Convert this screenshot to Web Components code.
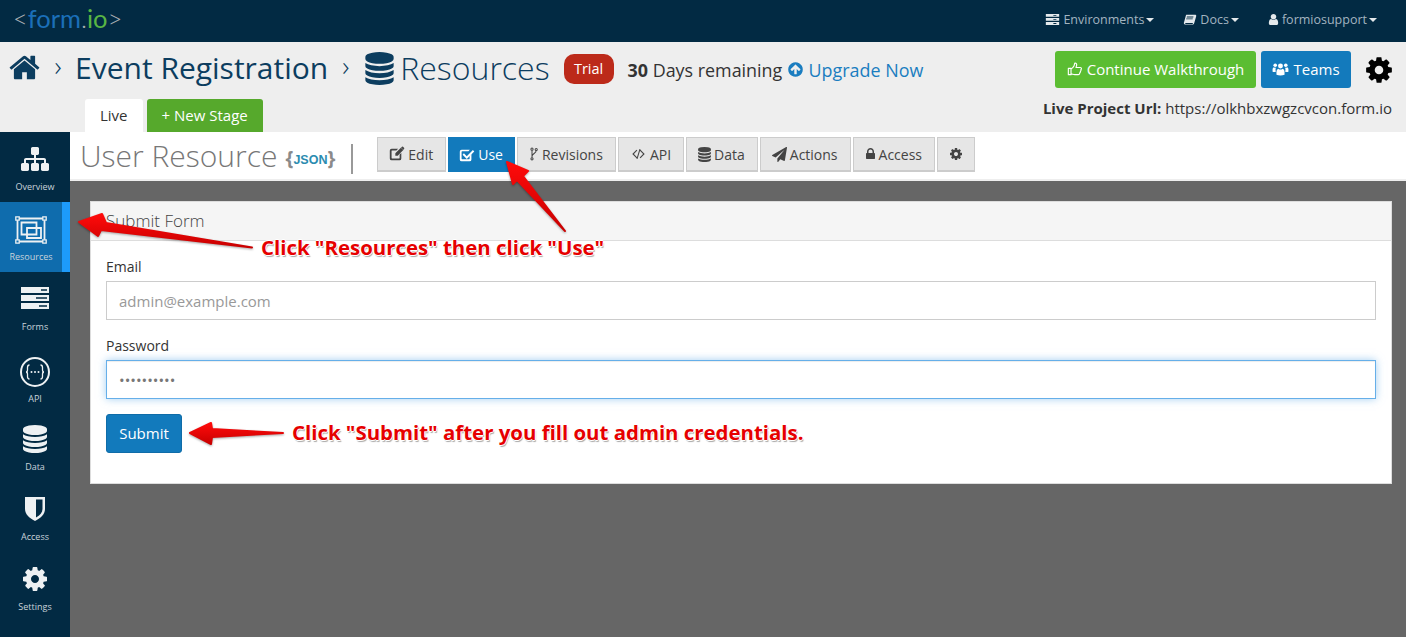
<!DOCTYPE html>
<html lang="en">
<head>
<meta charset="utf-8">
<title>Event Registration - User Resource</title>
<style>
	html, body { margin: 0; height: 100%; overflow: hidden; }
	body { font-family: "Open Sans", "Liberation Sans", sans-serif; color: #333; }
</style>
</head>
<body>
<app-shell>
	<top-bar slot="top"></top-bar>
	<project-header slot="header"></project-header>
	<side-nav slot="side">
		<nav-item icon="sitemap" size="28" label="Overview"></nav-item>
		<nav-item icon="resources" label="Resources" active></nav-item>
		<nav-item icon="forms" label="Forms"></nav-item>
		<nav-item icon="api" label="API"></nav-item>
		<nav-item icon="database" size="28" label="Data"></nav-item>
		<nav-item icon="shield" label="Access"></nav-item>
		<nav-item icon="cog" size="28" label="Settings"></nav-item>
	</side-nav>
	<resource-toolbar slot="toolbar">
		<tool-btn icon="edit" size="16" w="14">Edit</tool-btn>
		<tool-btn icon="check" size="16" w="14" active>Use</tool-btn>
		<tool-btn icon="fork" w="8">Revisions</tool-btn>
		<tool-btn icon="code" w="15">API</tool-btn>
		<tool-btn icon="database" size="15" w="11">Data</tool-btn>
		<tool-btn icon="plane" size="15" w="13">Actions</tool-btn>
		<tool-btn icon="lock" w="9">Access</tool-btn>
		<tool-btn icon="cog" w="12"></tool-btn>
	</resource-toolbar>
	<submit-panel slot="content"></submit-panel>
</app-shell>
<callout-layer></callout-layer>

<script>
const ICONS = {
	home: '<path d="M1472 992v480q0 26-19 45t-45 19h-384v-384h-256v384h-384q-26 0-45-19t-19-45v-480q0-1 .5-3t.5-3l575-474 575 474q1 2 1 6zm223-69l-62 74q-8 9-21 11h-3q-13 0-21-7l-692-577-692 577q-12 8-24 7-13-2-21-11l-62-74q-8-10-7-23.500t11-21.500l719-599q32-26 76-26t76 26l244 204v-195q0-14 9-23t23-9h192q14 0 23 9t9 23v408l219 182q10 8 11 21.500t-7 23.500z"/>',
	database: '<path d="M896 768q237 0 443-43t325-127v170q0 69-103 128t-280 93.500-385 34.500-385-34.500-280-93.500-103-128v-170q119 84 325 127t443 43zm0 768q237 0 443-43t325-127v170q0 69-103 128t-280 93.500-385 34.500-385-34.500-280-93.500-103-128v-170q119 84 325 127t443 43zm0-384q237 0 443-43t325-127v170q0 69-103 128t-280 93.500-385 34.500-385-34.500-280-93.500-103-128v-170q119 84 325 127t443 43zm0-1152q208 0 385 34.500t280 93.500 103 128v128q0 69-103 128t-280 93.500-385 34.500-385-34.500-280-93.500-103-128v-128q0-69 103-128t280-93.500 385-34.500z"/>',
	cog: '<path d="M1152 896q0-106-75-181t-181-75-181 75-75 181 75 181 181 75 181-75 75-181zm512-109v222q0 12-8 23t-20 13l-185 28q-19 54-39 91 35 50 107 138 10 12 10 25t-9 23q-27 37-99 108t-94 71q-12 0-26-9l-138-108q-44 23-91 38-16 136-29 186-7 28-36 28h-222q-14 0-24.500-8.500t-11.500-21.500l-28-184q-49-16-90-37l-141 107q-10 9-25 9-14 0-25-11-126-114-165-168-7-10-7-23 0-12 8-23 15-21 51-66.500t54-70.500q-27-50-41-99l-183-27q-13-2-21-12.500t-8-23.500v-222q0-12 8-23t19-13l186-28q14-46 39-92-40-57-107-138-10-12-10-24 0-10 9-23 26-36 98.500-107.500t94.500-71.500q13 0 26 10l138 107q44-23 91-38 16-136 29-186 7-28 36-28h222q14 0 24.500 8.500t11.500 21.500l28 184q49 16 90 37l142-107q9-9 24-9 13 0 25 10 129 119 165 170 7 8 7 22 0 12-8 23-15 21-51 66.500t-54 70.500q26 50 41 98l183 28q13 2 21 12.500t8 23.500z"/>',
	lock: '<path d="M640 768h512v-192q0-106-75-181t-181-75-181 75-75 181v192zm832 96v576q0 40-28 68t-68 28h-960q-40 0-68-28t-28-68v-576q0-40 28-68t68-28h32v-192q0-184 132-316t316-132 316 132 132 316v192h32q40 0 68 28t28 68z"/>',
	plane: '<path d="M1764 11q33 24 27 64l-256 1536q-5 29-32 45-14 8-31 8-11 0-24-5l-453-185-242 295q-18 23-49 23-13 0-22-4-19-7-30.500-23.500t-11.500-36.500v-349l864-1059-1069 925-395-162q-37-14-40-55-2-40 32-59l1664-960q15-9 32-9 20 0 36 11z"/>',
	user: '<path d="M1536 1399q0 109-62.500 187t-150.500 78h-854q-88 0-150.500-78t-62.500-187q0-85 8.500-160.500t31.500-152 58.500-131 94-89 134.500-34.500q131 128 313 128t313-128q76 0 134.500 34.500t94 89 58.500 131 31.500 152 8.500 160.500zm-256-887q0 159-112.500 271.500t-271.500 112.500-271.500-112.500-112.500-271.500 112.500-271.500 271.500-112.500 271.500 112.500 112.500 271.500z"/>',
	upcircle: '<path d="M1412 895q0-27-18-45l-362-362-91-91q-18-18-45-18t-45 18l-91 91-362 362q-18 18-18 45t18 45l91 91q18 18 45 18t45-18l189-189v502q0 26 19 45t45 19h128q26 0 45-19t19-45v-502l189 189q19 19 45 19t45-19l91-91q18-18 18-45zm252 1q0 209-103 385.500t-279.500 279.500-385.500 103-385.500-103-279.500-279.500-103-385.500 103-385.500 279.500-279.500 385.500-103 385.500 103 279.500 279.500 103 385.500z"/>',
	sitemap: '<path d="M1792 1248v320q0 40-28 68t-68 28h-320q-40 0-68-28t-28-68v-320q0-40 28-68t68-28h96v-192h-512v192h96q40 0 68 28t28 68v320q0 40-28 68t-68 28h-320q-40 0-68-28t-28-68v-320q0-40 28-68t68-28h96v-192h-512v192h96q40 0 68 28t28 68v320q0 40-28 68t-68 28h-320q-40 0-68-28t-28-68v-320q0-40 28-68t68-28h96v-192q0-52 38-90t90-38h512v-192h-96q-40 0-68-28t-28-68v-320q0-40 28-68t68-28h320q40 0 68 28t28 68v320q0 40-28 68t-68 28h-96v192h512q52 0 90 38t38 90v192h96q40 0 68 28t28 68z"/>',
	users: '<circle cx="896" cy="640" r="260"/><path d="M470 1560v-330q0-250 200-310 100 90 226 90t226-90q200 60 200 310v330q-200 70-426 70t-426-70z"/><circle cx="340" cy="560" r="190"/><circle cx="1452" cy="560" r="190"/><path d="M60 1240v-260q0-170 140-220 70 60 150 60 40 0 80-14-60 80-60 200 0 110 40 240-180 30-350-6zM1732 1240v-260q0-170-140-220-70 60-150 60-40 0-80-14 60 80 60 200 0 110-40 240 180 30 350-6z"/>',
	thumb: '<path fill="none" stroke="currentColor" stroke-width="130" stroke-linejoin="round" d="M150 830h300v700h-300zM450 890c130-30 250-190 330-330 60-100 40-280 110-330 120-20 220 90 190 260-15 90-60 150-70 240h480c80 0 130 60 130 130 0 60-40 100-70 120 30 70 10 150-50 190 15 80-20 150-80 180 10 110-60 180-160 180h-390c-150 0-270-70-420-90z"/>',
	edit: '<path d="M300 300h720l-190 190H340q-50 0-50 50v800q0 50 50 50h800q50 0 50-50V960l190-190v620q0 210-210 210H300q-210 0-210-210V510q0-210 210-210z"/><path d="M1330 190l270 270-620 620H710V810zM1420 100q40-40 80-40t70 30l110 110q30 30 30 70t-40 80l-70 70-250-250z"/>',
	check: '<path d="M300 300h800q60 0 110 20l-150 150H340q-50 0-50 50v800q0 50 50 50h800q50 0 50-50V970l200-200v620q0 210-210 210H300q-210 0-210-210V510q0-210 210-210z"/><path d="M1560 340l150 150-840 840-470-470 150-150 320 320z"/>',
	fork: '<g fill="none" stroke="currentColor" stroke-width="130"><circle cx="640" cy="280" r="140"/><circle cx="640" cy="1510" r="140"/><circle cx="1180" cy="320" r="140"/><path d="M640 420v950M1180 460c0 420-540 330-540 760"/></g>',
	code: '<path d="M640 360l100 100-430 436 430 436-100 100-540-536zM1150 360l540 536-540 536-100-100 430-436-430-436zM1020 240l130 40-380 1270-130-40z"/>',
	book: '<path d="M430 230h1120c110 0 170 70 140 190l-260 900c-30 110-110 170-220 170H330c-150 0-240-110-220-240 10-60 20-70 30-110L370 330c10-50 20-100 60-100zM500 450l-30 110h840l30-110zM420 700l-30 110h840l30-110zM340 1290c-30 0-60 30-60 70s30 70 60 70h880l60-140z"/>',
	servers: '<path d="M100 240h1592v340H100zM100 720h1592v340H100zM100 1200h1592v340H100z"/><path fill="#022a43" d="M1000 360h360v100h-360zM1000 840h360v100h-360zM1000 1320h360v100h-360z"/>'
};

const CUSTOM_ICONS = {
	resources: `<svg viewBox="0 0 32 28" width="32" height="28">
		<g fill="none" stroke="#eef1f3" stroke-width="1.800">
			<path d="M3 2.500h26M3 25.500h26M2.500 3v22M29.500 3v22"/>
			<path fill="#0f6cad" stroke-width="1.300" d="M.8.800h3.400v3.400H.8zM27.800.800h3.400v3.400h-3.400zM.8 23.800h3.400v3.400H.8zM27.800 23.800h3.400v3.400h-3.400z"/>
			<path d="M6.500 6.500h15v12h-15zM12 12h14v10H12z"/>
		</g>
	</svg>`,
	forms: `<svg viewBox="0 0 28 22" width="28" height="22">
		<path fill="#eef1f3" d="M0 0h28v6H0zM0 8h28v6H0zM0 16h28v6H0z"/>
		<path fill="#022a43" d="M20 2.200h6v1.600h-6zM15 10.200h11v1.600H15zM18 18.200h8v1.600h-8z"/>
	</svg>`,
	api: `<svg viewBox="0 0 30 30" width="30" height="30">
		<circle cx="15" cy="15" r="14" fill="none" stroke="#eef1f3" stroke-width="2"/>
		<g fill="none" stroke="#eef1f3" stroke-width="1.300">
			<path d="M9.500 8c-2 0-2 .8-2 2.500v2.300c0 1.200-.6 2.200-1.500 2.200.9 0 1.500 1 1.500 2.200v2.300c0 1.700 0 2.500 2 2.500M20.500 8c2 0 2 .8 2 2.500v2.300c0 1.200.6 2.200 1.500 2.200-.9 0-1.500 1-1.500 2.200v2.300c0 1.700 0 2.500-2 2.500"/>
		</g>
		<g fill="#eef1f3"><circle cx="11.500" cy="15" r="1"/><circle cx="15" cy="15" r="1"/><circle cx="18.500" cy="15" r="1"/></g>
	</svg>`,
	shield: `<svg viewBox="0 0 20 24" width="20" height="24">
		<path fill="#eef1f3" d="M0 0h20v12c0 5-4 9-10 12C4 21 0 17 0 12z"/>
		<path fill="#022a43" d="M11 2.500h6.500V12c0 3.500-2.500 6.200-6.500 8.500z"/>
	</svg>`
};

// one shared icon element. size is the drawn square, w sets the width it takes in the row
class FaIcon extends HTMLElement {
	connectedCallback() {
		const name = this.getAttribute("name");
		const size = +this.getAttribute("size") || 14;
		const w = +this.getAttribute("w") || size;
		const vbw = 1792 * w / size;
		this.attachShadow({ mode: "open" });
		this.shadowRoot.innerHTML = `
			<style>
				:host { display: inline-flex; align-items: center; justify-content: center; }
				svg { display: block; overflow: visible; }
				svg.fa { fill: currentColor; }
			</style>
			${CUSTOM_ICONS[name] || `<svg class="fa" viewBox="${(1792 - vbw) / 2} 0 ${vbw} 1792" width="${w}" height="${size}">${ICONS[name]}</svg>`}
		`;
	}
}
customElements.define("fa-icon", FaIcon);

class AppShell extends HTMLElement {
	constructor() {
		super();
		this.attachShadow({ mode: "open" });
		this.shadowRoot.innerHTML = `
			<style>
				:host { display: grid; height: 637px; width: 1406px; grid-template-columns: 70px 1fr; grid-template-rows: 42px 90px 49px 1fr; background: #666; }
				.top { grid-column: 1 / 3; }
				.header { grid-column: 1 / 3; }
				.side { grid-row: 3 / 5; }
				.content { padding: 20px 14px 0 20px; min-width: 0; }
			</style>
			<div class="top"><slot name="top"></slot></div>
			<div class="header"><slot name="header"></slot></div>
			<div class="side"><slot name="side"></slot></div>
			<div><slot name="toolbar"></slot></div>
			<div class="content"><slot name="content"></slot></div>
		`;
	}
}
customElements.define("app-shell", AppShell);

class TopBar extends HTMLElement {
	constructor() {
		super();
		this.attachShadow({ mode: "open" });
		this.shadowRoot.innerHTML = `
			<style>
				:host { display: flex; height: 42px; box-sizing: border-box; padding: 0 29px 3px 13px; background: #022a43; align-items: center; justify-content: space-between; color: #a3b4c0; font-size: 12.500px; }
				.logo { font: 300 25.500px/1 "Lato", "Open Sans", sans-serif; color: #a8adb2; margin-bottom: 1px; }
				.logo b { font-weight: 400; color: #1b6fb8; }
				.logo i { font-style: normal; font-weight: 400; color: #59b544; }
				nav { display: flex; gap: 29px; }
				.item { display: flex; align-items: center; gap: 3px; }
				.item fa-icon { color: #e4e9ec; }
				.caret { width: 0; height: 0; border: 4px solid transparent; border-top-color: #e4e9ec; border-bottom: 0; margin-left: -1px; }
			</style>
			<div class="logo">&lt;<b>form</b>.<i>io</i>&gt;</div>
			<nav>
				<div class="item"><fa-icon name="servers" size="15"></fa-icon>Environments<span class="caret"></span></div>
				<div class="item"><fa-icon name="book" size="14"></fa-icon>Docs<span class="caret"></span></div>
				<div class="item"><fa-icon name="user" size="13" w="11"></fa-icon>formiosupport<span class="caret"></span></div>
			</nav>
		`;
	}
}
customElements.define("top-bar", TopBar);

class ProjectHeader extends HTMLElement {
	constructor() {
		super();
		this.attachShadow({ mode: "open" });
		this.shadowRoot.innerHTML = `
			<style>
				:host { display: flex; flex-direction: column; height: 90px; background: #eee; padding: 0 14px 0 10px; box-sizing: border-box; }
				.row { display: flex; align-items: center; height: 55px; }
				.crumbs { display: flex; align-items: center; color: #0c3d5f; flex: 1; padding-bottom: 3px; }
				.home { margin: 0 0 2px -2px; }
				.sep { font-size: 28px; font-weight: 300; text-align: center; margin-bottom: 6px; }
				.sep.a { width: 34px; }
				.sep.b { width: 35px; }
				.project { font-size: 30px; line-height: 40px; }
				.res { font-size: 32px; font-weight: 300; line-height: 40px; margin-left: 4px; }
				.badge { background: #bc2a1a; color: #fff; font-size: 14.500px; height: 30px; line-height: 30px; width: 50px; text-align: center; border-radius: 10px; margin: 1px 14px 0; }
				.days { font-size: 17.900px; color: #333; margin-top: 3px; white-space: nowrap; }
				.upgrade { color: #1a7dc0; }
				.upgrade fa-icon { vertical-align: -1px; }
				.actions { display: flex; align-items: center; gap: 5px; }
				.btn { height: 37px; padding-bottom: 2px; border-radius: 3px; color: #fff; font-size: 15px; display: flex; align-items: center; justify-content: center; gap: 4px; box-sizing: border-box; }
				.go { width: 201px; background: #5bbd32; }
				.team { width: 90px; background: #137abc; }
				.gear { color: #000; margin: 0 -2px 0 8px; }
				.bottom { display: flex; align-items: flex-end; justify-content: space-between; flex: 1; }
				.tabs { display: flex; gap: 4px; margin-left: 75px; }
				.tab { height: 33px; line-height: 33px; padding: 0 15px; font-size: 15px; border-radius: 3px 3px 0 0; background: #fff; color: #333; }
				.tab.add { background: #56a92c; color: #fff; }
				.url { font-size: 15px; color: #333; align-self: flex-start; margin-top: 1px; }
			</style>
			<div class="row">
				<div class="crumbs">
					<fa-icon class="home" name="home" size="33"></fa-icon>
					<span class="sep a">›</span>
					<span class="project">Event Registration</span>
					<span class="sep b">›</span>
					<fa-icon name="database" size="33"></fa-icon>
					<span class="res">Resources</span>
					<span class="badge">Trial</span>
					<span class="days"><b>30</b> Days remaining <span class="upgrade"><fa-icon name="upcircle" size="17"></fa-icon> Upgrade Now</span></span>
				</div>
				<div class="actions">
					<div class="btn go"><fa-icon name="thumb" size="16"></fa-icon>Continue Walkthrough</div>
					<div class="btn team"><fa-icon name="users" size="17"></fa-icon>Teams</div>
					<fa-icon class="gear" name="cog" size="30"></fa-icon>
				</div>
			</div>
			<div class="bottom">
				<div class="tabs">
					<div class="tab">Live</div>
					<div class="tab add">+ New Stage</div>
				</div>
				<div class="url"><b>Live Project Url:</b> https://olkhbxzwgzcvcon.form.io</div>
			</div>
		`;
	}
}
customElements.define("project-header", ProjectHeader);

class SideNav extends HTMLElement {
	constructor() {
		super();
		this.attachShadow({ mode: "open" });
		this.shadowRoot.innerHTML = `
			<style>
				:host { display: flex; flex-direction: column; width: 70px; height: 100%; background: #022a43; }
			</style>
			<slot></slot>
		`;
	}
}
customElements.define("side-nav", SideNav);

class NavItem extends HTMLElement {
	connectedCallback() {
		this.attachShadow({ mode: "open" });
		this.shadowRoot.innerHTML = `
			<style>
				:host { display: flex; flex-direction: column; align-items: center; height: 70px; box-sizing: border-box; color: #eef1f3; }
				:host([active]) { background: #0f6cad; border-right: 8px solid #1d9bfb; }
				.ic { height: 48px; display: flex; align-items: center; justify-content: center; padding-top: 6px; box-sizing: border-box; }
				:host([icon="resources"]) .ic { padding-top: 8px; }
				:host([icon="forms"]) .ic { padding-top: 4px; }
				:host([icon="api"]) .ic { padding-top: 12px; }
				.label { font-size: 9px; line-height: 14px; color: #c9d3da; }
				:host([icon="api"]) .label { margin-top: 2px; }
			</style>
			<div class="ic"><fa-icon name="${this.getAttribute("icon")}" size="${this.getAttribute("size") || 30}"></fa-icon></div>
			<div class="label">${this.getAttribute("label")}</div>
		`;
	}
}
customElements.define("nav-item", NavItem);

class ResourceToolbar extends HTMLElement {
	constructor() {
		super();
		this.attachShadow({ mode: "open" });
		this.shadowRoot.innerHTML = `
			<style>
				:host { display: flex; align-items: flex-start; height: 49px; box-sizing: border-box; background: #fff; border-bottom: 2px solid #eee; padding-left: 10px; }
				h2 { margin: 0; font-size: 30px; font-weight: 300; color: #777; line-height: 48px; white-space: nowrap; }
				.json { font: 700 12.500px/40px "Liberation Sans", sans-serif; color: #2b8cb0; margin: 6px 0 0 8px; height: 40px; white-space: nowrap; }
				.json span { color: #8a8a8a; font: 700 20px/40px "Open Sans", sans-serif; vertical-align: -1px; }
				.rule { width: 2px; height: 30px; background: #999; margin: 12px 24px 0 16px; }
				.btns { display: flex; gap: 2px; padding-top: 5px; }
			</style>
			<h2>User Resource</h2>
			<div class="json"><span>{</span>JSON<span>}</span></div>
			<div class="rule"></div>
			<div class="btns"><slot></slot></div>
		`;
	}
}
customElements.define("resource-toolbar", ResourceToolbar);

class ToolBtn extends HTMLElement {
	connectedCallback() {
		this.attachShadow({ mode: "open" });
		this.shadowRoot.innerHTML = `
			<style>
				:host { display: flex; align-items: center; gap: 4px; height: 35px; padding: 0 12px; box-sizing: border-box; background: #e6e6e6; border: 1px solid #ccc; border-bottom-width: 2px; font-size: 14px; color: #444; white-space: nowrap; }
				:host([active]) { background: #127abc; border: 0; color: #fff; }
			</style>
			<fa-icon name="${this.getAttribute("icon")}" size="${this.getAttribute("size") || 14}" w="${this.getAttribute("w")}"></fa-icon><slot></slot>
		`;
	}
}
customElements.define("tool-btn", ToolBtn);

class SubmitPanel extends HTMLElement {
	constructor() {
		super();
		this.attachShadow({ mode: "open" });
		this.shadowRoot.innerHTML = `
			<style>
				:host { display: block; height: 283px; box-sizing: border-box; background: #fff; border: 1px solid #ddd; }
				.head { height: 38px; line-height: 37px; padding-left: 15px; background: #f5f5f5; border-bottom: 1px solid #ddd; font-size: 17px; font-weight: 300; color: #444; }
				.body { padding: 16px 15px 0; }
				label { display: block; font-size: 14px; line-height: 20px; color: #333; margin-bottom: 4px; }
				input { display: block; width: 100%; height: 39px; box-sizing: border-box; border: 1px solid #ccc; padding: 0 12px; font: 15px "Open Sans", sans-serif; color: #777; margin-bottom: 16px; outline: 0; border-radius: 0; }
				input::placeholder { color: #999; opacity: 1; }
				input.focus { border-color: #66afe9; margin-bottom: 15px; box-shadow: inset 0 1px 1px rgba(0,0,0,.075), 0 0 8px rgba(102,175,233,.6); }
				button { display: block; width: 76px; height: 39px; background: #127abc; color: #fff; border: 1px solid #0f6ca8; border-radius: 3px; font: 15px "Open Sans", sans-serif; padding: 0 0 2px; }
			</style>
			<div class="head">Submit Form</div>
			<div class="body">
				<label>Email</label>
				<input type="text" placeholder="admin@example.com">
				<label>Password</label>
				<input class="focus" type="password" value="0123456789">
				<button>Submit</button>
			</div>
		`;
	}
}
customElements.define("submit-panel", SubmitPanel);

// red annotations drawn on top of the screenshot
class CalloutLayer extends HTMLElement {
	constructor() {
		super();
		this.attachShadow({ mode: "open" });
		this.shadowRoot.innerHTML = `
			<style>
				:host { position: absolute; left: 0; top: 0; width: 1406px; height: 637px; pointer-events: none; }
				svg { position: absolute; left: 0; top: 0; filter: drop-shadow(0 1px 1px rgba(0,0,0,.35)); }
				.note { position: absolute; font-size: 20.400px; line-height: 24px; font-weight: 700; color: #e60000; white-space: nowrap; text-shadow: -1px 0 0 #fff, 1px 0 0 #fff, 0 -1px 0 #fff, 0 1px 0 #fff, 1px 2px 1px #aaa; }
			</style>
			<svg width="1406" height="637" viewBox="0 0 1406 637">
				<defs>
					<linearGradient id="red" x1="0" y1="0" x2="0" y2="1">
						<stop offset="0" stop-color="#ff0b0b"/>
						<stop offset="1" stop-color="#c90000"/>
					</linearGradient>
				</defs>
				<g fill="url(#red)" stroke="url(#red)" stroke-width="2" stroke-linejoin="round">
					<path d="M252 247.500L106 223L102 214L79 222L98 236L101 230z"/>
					<path d="M565 231L523 176L528 171L507 162L513 184L517 180z"/>
					<path d="M283 433L212 429L211 423L190 433L211 444L212 437z"/>
				</g>
			</svg>
			<div class="note" style="left:261px;top:235px">Click "Resources" then click "Use"</div>
			<div class="note" style="left:292px;top:420px">Click "Submit" after you fill out admin credentials.</div>
		`;
	}
}
customElements.define("callout-layer", CalloutLayer);
</script>
</body>
</html>
